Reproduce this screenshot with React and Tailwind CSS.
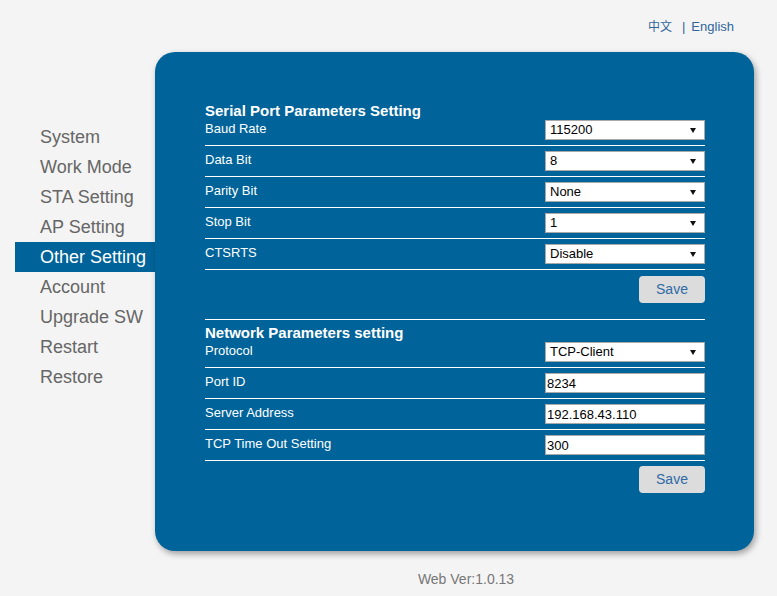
import React from "react";

const FONT = { fontFamily: '"Liberation Sans", Arial, "Noto Sans CJK SC", sans-serif' };

function Arrow() {
  return (
    <svg className="absolute right-[8px] top-[7px]" width="6" height="5" viewBox="0 0 6 5">
      <polygon points="0,0 6,0 3,5" fill="#111" />
    </svg>
  );
}

function Select({ value }) {
  return (
    <div className="relative w-[160px] h-[20px] bg-white border border-[#a9a9a9] pl-[4px] text-[13px] leading-[18px] text-black">
      {value}
      <Arrow />
    </div>
  );
}

function Input({ value }) {
  return (
    <input
      readOnly
      value={value}
      className="w-[160px] h-[20px] bg-white border border-[#a9a9a9] px-[1px] text-[13px] leading-[18px] text-black outline-none"
      style={FONT}
    />
  );
}

function Row({ label, children }) {
  return (
    <div className="flex items-center justify-between h-[31px] border-b border-white">
      <span className="text-[13px] leading-[15px] text-white pb-[3px]">{label}</span>
      {children}
    </div>
  );
}

function Heading({ children }) {
  return (
    <div className="h-[8px] leading-[8px] text-[15px] font-bold text-white whitespace-nowrap">{children}</div>
  );
}

function SaveBtn() {
  return (
    <div className="flex justify-end">
      <button className="w-[66px] h-[27px] rounded-[4px] bg-[#dcdcdc] text-[14px] text-[#2f6aa6] leading-[27px]" style={FONT}>
        Save
      </button>
    </div>
  );
}

const menu = ["System", "Work Mode", "STA Setting", "AP Setting", "Other Setting", "Account", "Upgrade SW", "Restart", "Restore"];

export default function App() {
  return (
    <div className="w-[777px] h-[596px] bg-[#f4f4f4] overflow-hidden" style={FONT}>
      <div className="h-[52px] pt-[19px] pr-[43px] flex justify-end items-start text-[13px] leading-[16px] text-[#31659c]">
        <span className="text-[12px] mr-[10px]">中文</span>
        <span>|</span>
        <span className="ml-[6px]">English</span>
      </div>
      <div className="flex">
        <div className="ml-[15px] w-[140px] mt-[70px]">
          {menu.map((m) => (
            <div
              key={m}
              className={
                m === "Other Setting"
                  ? "h-[30px] leading-[30px] pl-[25px] text-[18px] bg-[#006399] text-white whitespace-nowrap"
                  : "h-[30px] leading-[30px] pl-[25px] text-[18px] text-[#666666] whitespace-nowrap"
              }
            >
              {m}
            </div>
          ))}
        </div>
        <div className="flex-1 flex flex-col">
          <div className="w-[599px] h-[499px] bg-[#006399] rounded-[20px] shadow-[2px_3px_6px_rgba(0,0,0,0.35)] pt-[55px] pl-[50px] pr-[49px]">
            <Heading>Serial Port Parameters Setting</Heading>
            <Row label="Baud Rate"><Select value="115200" /></Row>
            <Row label="Data Bit"><Select value="8" /></Row>
            <Row label="Parity Bit"><Select value="None" /></Row>
            <Row label="Stop Bit"><Select value="1" /></Row>
            <Row label="CTSRTS"><Select value="Disable" /></Row>
            <div className="mt-[6px]"><SaveBtn /></div>
            <div className="mt-[16px] h-px bg-white" />
            <div className="mt-[9px]">
              <Heading>Network Parameters setting</Heading>
            </div>
            <Row label="Protocol"><Select value="TCP-Client" /></Row>
            <Row label="Port ID"><Input value="8234" /></Row>
            <Row label="Server Address"><Input value="192.168.43.110" /></Row>
            <Row label="TCP Time Out Setting"><Input value="300" /></Row>
            <div className="mt-[5px]"><SaveBtn /></div>
          </div>
          <div className="mt-[20px] text-center text-[14px] leading-[16px] text-[#777777]">Web Ver:1.0.13</div>
        </div>
      </div>
    </div>
  );
}
